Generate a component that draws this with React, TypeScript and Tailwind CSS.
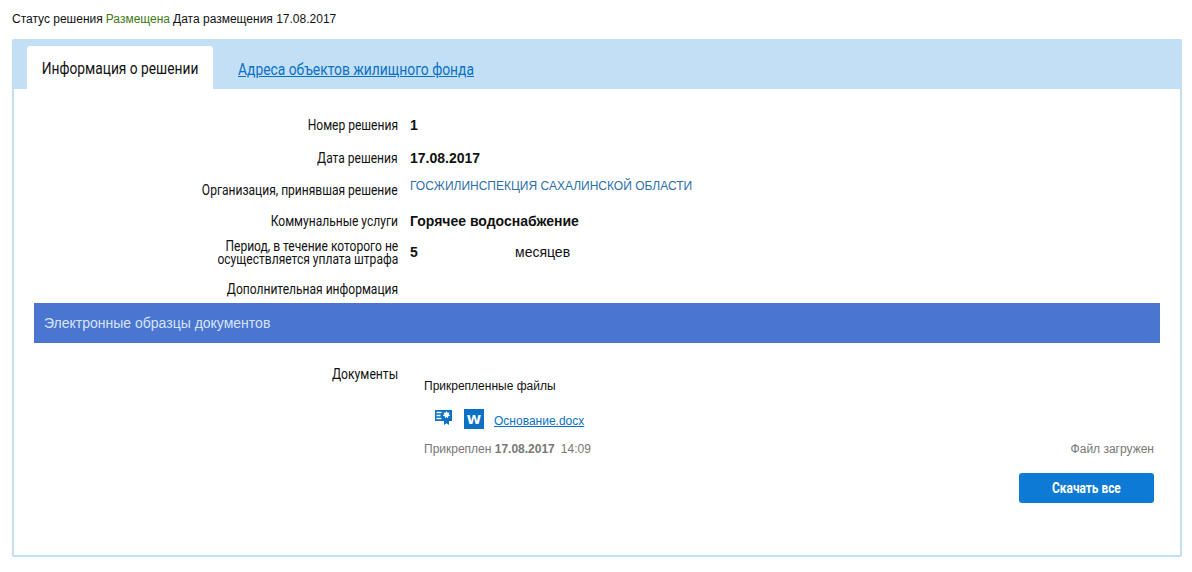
const roboto = "font-['Roboto',sans-serif]";

function InfoRow({ label, height, children, align = "items-center" }: { label: React.ReactNode; height: string; children?: React.ReactNode; align?: string }) {
  return (
    <div className={`flex ${height} ${align}`}>
      <div className={`w-[364px] shrink-0 text-right text-[14px] leading-[13px] text-[#111] ${roboto}`}>
        <span className="inline-block origin-right scale-x-[0.86] whitespace-nowrap">{label}</span>
      </div>
      <div className="ml-3 min-w-0 flex-1">{children}</div>
    </div>
  );
}

function CertIcon() {
  return (
    <svg className="h-[18px] w-[18px]" viewBox="0 0 18 18" fill="none">
      <rect x="1" y="2" width="17" height="11" fill="#0b71c4" />
      <path d="M2.500 4.500h5M2.500 7.500h4M2.500 10.500h5" stroke="#fff" strokeWidth="1.300" />
      <path d="M12.500 3l1 1.700 2-.3-.7 1.900 1.400 1.400-2 .5-.2 2-1.500-1.300-1.500 1.300-.2-2-2-.5 1.400-1.400-.7-1.900 2 .3z" fill="#fff" />
      <path d="M10 13v4l2.500-1.700 2.500 1.700v-4z" fill="#0b71c4" />
    </svg>
  );
}

function WordIcon() {
  return (
    <div className="flex h-5 w-5 items-center justify-center bg-[#0b71c4] font-['DejaVu_Sans',sans-serif] text-[13px] font-bold leading-none text-white">
      W
    </div>
  );
}

export default function App() {
  return (
    <div className="h-[572px] w-[1192px] overflow-hidden bg-white px-3 font-['Liberation_Sans',sans-serif] text-[12px] text-[#111]">
      <div className="flex h-[39px] items-center pb-[2px] pt-0">
        <span>Статус решения</span>
        <span className="ml-[3px] text-[#3d7a12]">Размещена</span>
        <span className="ml-[3px]">Дата размещения 17.08.2017</span>
      </div>

      <div className="h-[518px] w-[1170px] rounded-[2px] border-2 border-t-0 border-[#c2dff6]">
        <div className="flex h-[50px] items-end bg-[#c2dff6] pl-[13px]">
          <div className={`flex h-[43px] w-[186px] items-center justify-center rounded-t-[3px] bg-white pt-[2px] text-[16px] text-[#111] ${roboto}`}>
            <span className="inline-block scale-x-[0.86] whitespace-nowrap">Информация о решении</span>
          </div>
          <a className={`mb-[9px] ml-[25px] inline-block origin-left scale-x-[0.865] whitespace-nowrap text-[16px] leading-[20px] text-[#0b71c4] underline ${roboto}`}>
            Адреса объектов жилищного фонда
          </a>
        </div>

        <div className="pl-5 pr-5 pt-5">
          <InfoRow label="Номер решения" height="h-[33px]">
            <span className="text-[14px] font-bold">1</span>
          </InfoRow>
          <InfoRow label="Дата решения" height="h-[33px]">
            <span className="text-[14px] font-bold">17.08.2017</span>
          </InfoRow>
          <InfoRow label="Организация, принявшая решение" height="h-[31px]">
            <span className="relative top-[-5px] text-[12px] text-[#2c6fa8]">ГОСЖИЛИНСПЕКЦИЯ САХАЛИНСКОЙ ОБЛАСТИ</span>
          </InfoRow>
          <InfoRow label="Коммунальные услуги" height="h-[30px]">
            <span className="text-[14px] font-bold">Горячее водоснабжение</span>
          </InfoRow>
          <InfoRow
            label={
              <>
                Период, в течение которого не
                <br />
                осуществляется уплата штрафа
              </>
            }
            height="h-[34px]"
          >
            <div className="relative top-[-1px] flex items-center text-[14px]">
              <span className="w-[105px] font-bold">5</span>
              <span>месяцев</span>
            </div>
          </InfoRow>
          <InfoRow label="Дополнительная информация" height="h-[33px]" align="items-end pb-[7px]" />

          <div className="flex h-10 items-center bg-[#4a76d1] pl-[10px] text-[14px] text-[#d8e3f6]">
            Электронные образцы документов
          </div>

          <div className="flex pt-6">
            <div className={`w-[364px] shrink-0 text-right text-[14px] leading-[14px] text-[#111] ${roboto}`}>
              <span className="inline-block origin-right scale-x-[0.87]">Документы</span>
            </div>
            <div className="ml-[26px] flex-1 pr-[6px] pt-[12px]">
              <div className="text-[12px] leading-[14px]">Прикрепленные файлы</div>
              <div className="mt-[15px] flex items-start pl-[10px]">
                <CertIcon />
                <div className="ml-3 mt-px">
                  <WordIcon />
                </div>
                <a className="ml-[10px] mt-[5px] text-[12px] leading-4 text-[#0b71c4] underline">Основание.docx</a>
              </div>
              <div className="mt-[13px] flex items-center justify-between text-[12px] leading-[14px] text-[#777]">
                <div>
                  Прикреплен <span className="font-bold">17.08.2017</span>
                  <span className="ml-[6px]">14:09</span>
                </div>
                <div>Файл загружен</div>
              </div>
              <div className="mt-[17px] flex justify-end">
                <button className={`h-[30px] w-[135px] rounded-[3px] bg-[#0d7bd5] text-[14px] font-bold text-white ${roboto}`}>
                  <span className="inline-block scale-x-[0.85]">Скачать все</span>
                </button>
              </div>
            </div>
          </div>
        </div>
      </div>
    </div>
  );
}
